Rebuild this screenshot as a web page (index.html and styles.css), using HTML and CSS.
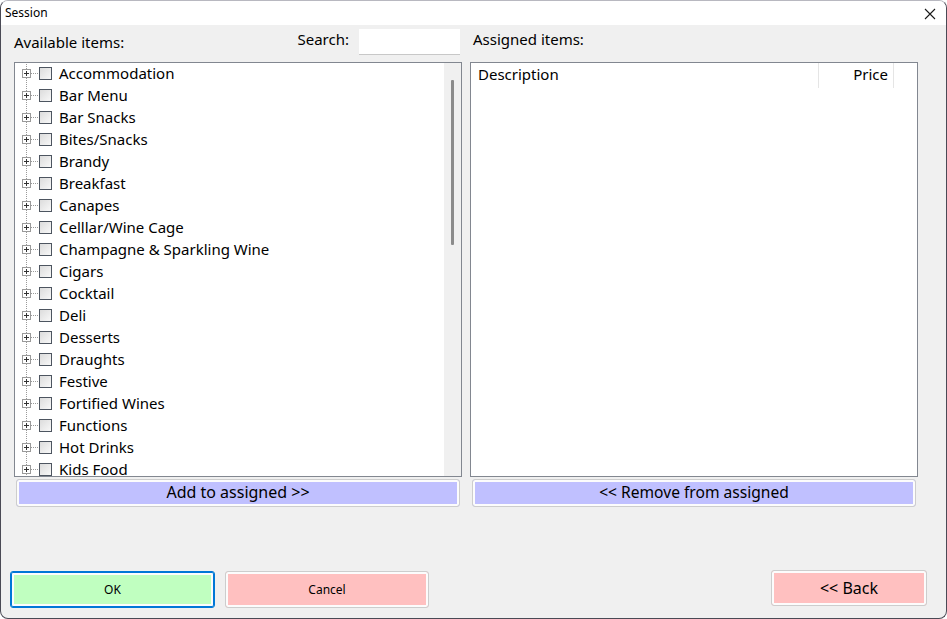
FILE: index.html
```html
<!DOCTYPE html>
<html>
<head>
<meta charset="utf-8">
<title>Session</title>
<link rel="stylesheet" href="styles.css">
</head>
<body>
<div class="window">
  <div class="titlebar">
    <span class="title">Session</span>
    <svg class="close" width="12" height="12" viewBox="0 0 12 12"><path d="M1 1 L11 11 M11 1 L1 11" stroke="#1a1a1a" stroke-width="1.1" fill="none"/></svg>
  </div>
  <div class="content">
    <div class="panels">
      <div class="panel">
        <div class="head">
          <span class="label avail">Available items:</span>
          <span class="label search-label">Search:</span>
          <input class="search" type="text">
        </div>
        <div class="listbox">
          <div class="tree">
            <div class="row"><span class="exp"></span><span class="dots"></span><span class="chk"></span><span class="txt">Accommodation</span></div>
            <div class="row"><span class="exp"></span><span class="dots"></span><span class="chk"></span><span class="txt">Bar Menu</span></div>
            <div class="row"><span class="exp"></span><span class="dots"></span><span class="chk"></span><span class="txt">Bar Snacks</span></div>
            <div class="row"><span class="exp"></span><span class="dots"></span><span class="chk"></span><span class="txt">Bites/Snacks</span></div>
            <div class="row"><span class="exp"></span><span class="dots"></span><span class="chk"></span><span class="txt">Brandy</span></div>
            <div class="row"><span class="exp"></span><span class="dots"></span><span class="chk"></span><span class="txt">Breakfast</span></div>
            <div class="row"><span class="exp"></span><span class="dots"></span><span class="chk"></span><span class="txt">Canapes</span></div>
            <div class="row"><span class="exp"></span><span class="dots"></span><span class="chk"></span><span class="txt">Celllar/Wine Cage</span></div>
            <div class="row"><span class="exp"></span><span class="dots"></span><span class="chk"></span><span class="txt">Champagne &amp; Sparkling Wine</span></div>
            <div class="row"><span class="exp"></span><span class="dots"></span><span class="chk"></span><span class="txt">Cigars</span></div>
            <div class="row"><span class="exp"></span><span class="dots"></span><span class="chk"></span><span class="txt">Cocktail</span></div>
            <div class="row"><span class="exp"></span><span class="dots"></span><span class="chk"></span><span class="txt">Deli</span></div>
            <div class="row"><span class="exp"></span><span class="dots"></span><span class="chk"></span><span class="txt">Desserts</span></div>
            <div class="row"><span class="exp"></span><span class="dots"></span><span class="chk"></span><span class="txt">Draughts</span></div>
            <div class="row"><span class="exp"></span><span class="dots"></span><span class="chk"></span><span class="txt">Festive</span></div>
            <div class="row"><span class="exp"></span><span class="dots"></span><span class="chk"></span><span class="txt">Fortified Wines</span></div>
            <div class="row"><span class="exp"></span><span class="dots"></span><span class="chk"></span><span class="txt">Functions</span></div>
            <div class="row"><span class="exp"></span><span class="dots"></span><span class="chk"></span><span class="txt">Hot Drinks</span></div>
            <div class="row"><span class="exp"></span><span class="dots"></span><span class="chk"></span><span class="txt">Kids Food</span></div>
          </div>
          <div class="scrollbar"><div class="thumb"></div></div>
        </div>
        <button class="btn blue">Add to assigned &gt;&gt;</button>
      </div>
      <div class="panel">
        <div class="head">
          <span class="label assigned">Assigned items:</span>
        </div>
        <div class="listbox grid">
          <div class="cols">
            <div class="col desc">Description</div>
            <div class="col price">Price</div>
          </div>
        </div>
        <button class="btn blue remove">&lt;&lt; Remove from assigned</button>
      </div>
    </div>
    <div class="footer">
      <button class="btn green ok">OK</button>
      <button class="btn red cancel">Cancel</button>
      <button class="btn red back">&lt;&lt; Back</button>
    </div>
  </div>
</div>
</body>
</html>
```

FILE: styles.css
```css
html, body {
  margin: 0;
  padding: 0;
  background: #ffffff;
}
body {
  font-family: "Noto Sans", "Open Sans", sans-serif;
  color: #000;
  width: 947px;
  height: 619px;
  overflow: hidden;
}
.window {
  box-sizing: border-box;
  width: 947px;
  height: 619px;
  background: #f0f0f0;
  border: 1px solid #4a4a55;
  border-top-color: #b8b8c0;
  border-radius: 8px;
  display: flex;
  flex-direction: column;
  overflow: hidden;
}
.titlebar {
  height: 24px;
  background: #ffffff;
  display: flex;
  align-items: center;
  justify-content: space-between;
  padding: 0 10px 0 4px;
  flex: none;
}
.title {
  font-size: 12px;
  line-height: 14px;
}
.close {
  display: block;
  margin-top: 1px;
}
.content {
  flex: 1;
  display: flex;
  flex-direction: column;
  padding: 4px 0 0 13px;
}
.panels {
  display: flex;
  gap: 8px;
}
.panel {
  width: 448px;
  display: flex;
  flex-direction: column;
}
.head {
  height: 26px;
  margin-bottom: 7px;
  display: flex;
  align-items: center;
}
.label {
  font-size: 15px;
  line-height: 18px;
  color: #000;
}
.avail {
  margin-top: 0;
}
.search-label {
  margin-left: auto;
  margin-right: 10px;
  margin-bottom: 7px;
}
.search {
  box-sizing: border-box;
  width: 101px;
  height: 26px;
  margin-right: 2px;
  border: none;
  border-bottom: 1px solid #c8c8c8;
  background: #fff;
  padding: 0;
  outline: none;
}
.assigned {
  padding-left: 3px;
  margin-bottom: 7px;
}
.listbox {
  box-sizing: border-box;
  height: 415px;
  border: 1px solid #828790;
  background: #fff;
  display: flex;
  overflow: hidden;
}
.tree {
  flex: 1;
  overflow: hidden;
  padding-left: 7px;
  margin-top: -1px;
}
.row {
  height: 22px;
  display: flex;
  align-items: center;
  background-image: repeating-linear-gradient(to bottom, #9a9a9a 0 1px, transparent 1px 2px);
  background-size: 1px 100%;
  background-repeat: no-repeat;
  background-position: 4px 0;
}
.exp {
  box-sizing: border-box;
  width: 9px;
  height: 9px;
  border: 1px solid #9a9a9a;
  background: #fff;
  position: relative;
  flex: none;
}
.exp::before {
  content: "";
  position: absolute;
  left: 1px;
  top: 3px;
  width: 5px;
  height: 1px;
  background: #333;
}
.exp::after {
  content: "";
  position: absolute;
  left: 3px;
  top: 1px;
  width: 1px;
  height: 5px;
  background: #333;
}
.dots {
  width: 7px;
  height: 0;
  border-top: 1px dotted #9a9a9a;
  flex: none;
}
.chk {
  box-sizing: border-box;
  width: 13px;
  height: 13px;
  border: 1px solid #4d5560;
  background: linear-gradient(135deg, #dcdcdc, #f8f8f8);
  margin-left: 1px;
  flex: none;
}
.txt {
  font-size: 15px;
  line-height: 20px;
  margin-left: 7px;
  white-space: nowrap;
}
.scrollbar {
  width: 17px;
  background: #f0f0f0;
  flex: none;
  display: flex;
  justify-content: center;
  padding-top: 17px;
  box-sizing: border-box;
}
.thumb {
  width: 3px;
  height: 165px;
  background: #8b8b8b;
  border-radius: 1px;
}
.grid {
  flex-direction: column;
}
.cols {
  display: flex;
  height: 25px;
}
.col {
  font-size: 15px;
  line-height: 22px;
}
.desc {
  width: 348px;
  padding-left: 7px;
  box-sizing: border-box;
  border-right: 1px solid #e5e5e5;
}
.price {
  width: 75px;
  box-sizing: border-box;
  text-align: right;
  padding-right: 5px;
  border-right: 1px solid #e5e5e5;
}
.btn {
  font-family: "Noto Sans", "Open Sans", sans-serif;
  color: #000;
  cursor: default;
  box-sizing: border-box;
  border: 1px solid #cdcdcd;
  border-radius: 3px;
  box-shadow: inset 0 0 0 2px #fcfcfc;
  padding: 0;
}
.blue {
  background: #c0c0ff;
  margin: 2px 2px 0 2px;
  height: 28px;
  font-size: 16px;
  line-height: 24px;
  padding-bottom: 2px;
}
.remove {
  font-size: 15.6px;
}
.green {
  background: #c0ffc0;
  border-color: #0078d7;
  box-shadow: inset 0 0 0 1px #0078d7, inset 0 0 0 3px #fcfcfc;
}
.red {
  background: #ffc0c0;
}
.footer {
  margin-top: auto;
  display: flex;
  align-items: flex-start;
  padding: 0 19px 10px 0;
  margin-left: -4px;
}
.ok, .cancel {
  height: 37px;
  font-size: 12px;
}
.ok {
  width: 205px;
}
.cancel {
  width: 204px;
  margin-left: 10px;
}
.back {
  width: 156px;
  height: 36px;
  margin-left: auto;
  margin-top: -1px;
  font-size: 16px;
}
```
